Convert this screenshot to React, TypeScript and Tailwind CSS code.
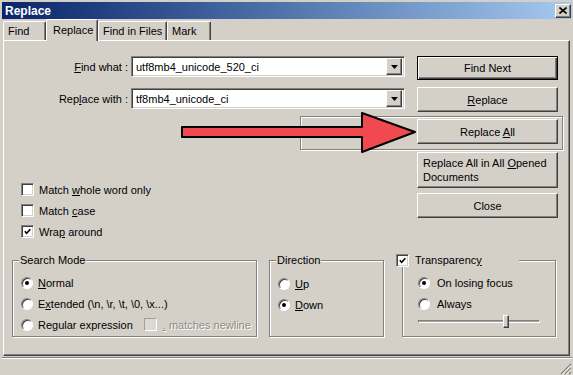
import React from "react";

const raised =
  "border border-t-white border-l-white border-r-[#404040] border-b-[#404040] shadow-[inset_-1px_-1px_0_#808080]";
const sunken =
  "border border-t-[#808080] border-l-[#808080] border-r-white border-b-white shadow-[inset_1px_1px_0_#404040,inset_-1px_-1px_0_#d4d0c8]";
const etched = "border border-[#808080] shadow-[inset_1px_1px_0_#fff,1px_1px_0_#fff]";

function U({ children }: { children: React.ReactNode }) {
  return <span className="underline underline-offset-[1px]">{children}</span>;
}

function Checkbox({ checked = false, disabled = false }: { checked?: boolean; disabled?: boolean }) {
  return (
    <span
      className={`flex h-[13px] w-[13px] shrink-0 items-center justify-center ${
        disabled
          ? "border border-t-[#a0a0a0] border-l-[#a0a0a0] border-r-white border-b-white bg-[#dcd9d2]"
          : `${sunken} bg-white`
      }`}
    >
      {checked && (
        <svg width="7" height="7" viewBox="0 0 7 7">
          <polyline points="0.8,3.2 2.6,5.2 6.4,1.2" fill="none" stroke="#000" strokeWidth="1.6" />
        </svg>
      )}
    </span>
  );
}

function Radio({ checked = false }: { checked?: boolean }) {
  return (
    <span className="flex h-[12px] w-[12px] shrink-0 items-center justify-center rounded-full border border-t-[#808080] border-l-[#808080] border-r-white border-b-white bg-white shadow-[inset_1px_1px_0_#404040]">
      {checked && <span className="h-[4px] w-[4px] rounded-full bg-black" />}
    </span>
  );
}

function Btn({
  children,
  className = "",
  isDefault = false,
}: {
  children: React.ReactNode;
  className?: string;
  isDefault?: boolean;
}) {
  const look = isDefault
    ? "border border-black shadow-[inset_1px_1px_0_#fff,inset_-1px_-1px_0_#404040,inset_-2px_-2px_0_#808080]"
    : raised;
  return (
    <button type="button" className={`flex w-[141px] shrink-0 items-center justify-center bg-[#d4d0c8] ${look} ${className}`}>
      <span>{children}</span>
    </button>
  );
}

function ComboField({ label, value, className = "" }: { label: React.ReactNode; value: string; className?: string }) {
  return (
    <div className={`flex items-center ${className}`}>
      <div className="flex h-[21px] w-[124px] items-center justify-end">
        <span>{label}</span>
      </div>
      <div className={`ml-[3px] flex h-[21px] w-[274px] items-center bg-white pl-[4px] pr-[2px] ${sunken}`}>
        <span className="flex-1 whitespace-nowrap">{value}</span>
        <span className={`flex h-[17px] w-[16px] items-center justify-center bg-[#d4d0c8] ${raised}`}>
          <svg width="7" height="4" viewBox="0 0 7 4">
            <polygon points="0,0 7,0 3.5,4" fill="#000" />
          </svg>
        </span>
      </div>
    </div>
  );
}

function Tab({ label, width, active = false }: { label: string; width: string; active?: boolean }) {
  return (
    <div
      className={`flex items-center rounded-t-[2px] border-t border-l border-r border-t-white border-l-white border-r-[#404040] bg-[#d4d0c8] shadow-[inset_-1px_0_0_#808080] ${width} ${
        active ? "relative z-10 -mb-[1px] h-[22px] pl-[6px] pb-[2px]" : "h-[19px] pl-[4px]"
      }`}
    >
      {label}
    </div>
  );
}

export default function App() {
  return (
    <div className="relative flex h-[375px] w-[573px] flex-col overflow-hidden bg-[#d4d0c8] pl-[2px] pr-[1px] pt-[2px] font-['Liberation_Sans',Arial,sans-serif] text-[11px] leading-[14px] text-black">
      {/* Title bar */}
      <div className="flex h-[17px] shrink-0 items-center justify-between bg-linear-to-r from-[#0a246a] to-[#a6caf0] pl-[3px] pr-[1px]">
        <span className="text-[12px] font-bold text-white">Replace</span>
        <span className={`flex h-[14px] w-[16px] items-center justify-center bg-[#d4d0c8] ${raised}`}>
          <svg width="8" height="7" viewBox="0 0 8 7">
            <path d="M0.5 0.5 L7.5 6.5 M7.5 0.5 L0.5 6.5" stroke="#000" strokeWidth="1.6" />
          </svg>
        </span>
      </div>

      {/* Tabs */}
      <div className="flex h-[21px] shrink-0 items-end pl-[1px]">
        <Tab label="Find" width="w-[43px]" />
        <Tab label="Replace" width="w-[52px]" active />
        <Tab label="Find in Files" width="w-[69px]" />
        <Tab label="Mark" width="w-[44px]" />
      </div>

      {/* Panel */}
      <div className={`ml-[1px] mr-[2px] flex h-[316px] shrink-0 flex-col bg-[#d4d0c8] ${raised}`}>
        <div className="mt-[15px] flex h-[25px] items-start">
          <ComboField
            label={
              <>
                <U>F</U>ind what :
              </>
            }
            value="utf8mb4_unicode_520_ci"
          />
          <Btn isDefault className="ml-[12px] h-[24px]">
            Find Next
          </Btn>
        </div>

        <div className="mt-[6px] flex h-[25px] items-start">
          <ComboField
            className="mt-[1px]"
            label={
              <>
                Rep<U>l</U>ace with :
              </>
            }
            value="tf8mb4_unicode_ci"
          />
          <Btn className="ml-[12px] h-[25px]">
            <U>R</U>eplace
          </Btn>
        </div>

        <div className={`ml-[296px] mt-[4px] h-[34px] w-[263px] pl-[116px] pt-[2px] ${etched}`}>
          <Btn className="h-[25px]">
            Replace <U>A</U>ll
          </Btn>
        </div>

        <div className="mt-[2px] flex">
          <div className="flex w-[413px] flex-col pl-[17px] pt-[27px]">
            <div className="flex h-[21px] items-center gap-[5px]">
              <Checkbox />
              <span>
                Match <U>w</U>hole word only
              </span>
            </div>
            <div className="flex h-[21px] items-center gap-[5px]">
              <Checkbox />
              <span>
                Match <U>c</U>ase
              </span>
            </div>
            <div className="flex h-[21px] items-center gap-[5px]">
              <Checkbox checked />
              <span>
                Wra<U>p</U> around
              </span>
            </div>
          </div>
          <div className="flex w-[141px] flex-col gap-[5px]">
            <Btn className="h-[36px] !justify-start pl-[5px] text-left">
              Replace All in All <U>O</U>pened
              <br />
              Documents
            </Btn>
            <Btn className="h-[25px]">Close</Btn>
          </div>
        </div>

        <div className="mt-[11px] flex items-start pl-[8px]">
          <fieldset className={`h-[84px] w-[245px] ${etched}`}>
            <legend className="ml-[6px] bg-[#d4d0c8] px-[1px]">Search Mode</legend>
            <div className="flex flex-col pl-[8px] pt-[5px]">
              <div className="flex h-[21px] items-center gap-[5px]">
                <Radio checked />
                <span>
                  <U>N</U>ormal
                </span>
              </div>
              <div className="flex h-[21px] items-center gap-[5px]">
                <Radio />
                <span>
                  E<U>x</U>tended (\n, \r, \t, \0, \x...)
                </span>
              </div>
              <div className="flex h-[21px] items-center overflow-hidden whitespace-nowrap">
                <Radio />
                <span className="ml-[5px]">
                  Re<U>g</U>ular expression
                </span>
                <span className="ml-[11px]">
                  <Checkbox disabled />
                </span>
                <span className="ml-[6px] text-[#8c8a85] [text-shadow:1px_1px_0_#fff]">
                  <U>.</U> matches newline
                </span>
              </div>
            </div>
          </fieldset>

          <fieldset className={`ml-[12px] h-[84px] w-[115px] ${etched}`}>
            <legend className="ml-[6px] bg-[#d4d0c8] px-[1px]">Direction</legend>
            <div className="flex flex-col pl-[8px] pt-[6px]">
              <div className="flex h-[21px] items-center gap-[5px]">
                <Radio />
                <span>
                  <U>U</U>p
                </span>
              </div>
              <div className="flex h-[21px] items-center gap-[5px]">
                <Radio checked />
                <span>
                  <U>D</U>own
                </span>
              </div>
            </div>
          </fieldset>

          <fieldset className={`ml-[18px] h-[84px] w-[154px] ${etched}`}>
            <legend className="-ml-[7px] flex w-[123px] items-center gap-[6px] bg-[#d4d0c8]">
              <Checkbox checked />
              <span>
                Transparenc<U>y</U>
              </span>
            </legend>
            <div className="flex flex-col pl-[15px] pt-[5px]">
              <div className="flex h-[21px] items-center gap-[7px]">
                <Radio checked />
                <span>On losing focus</span>
              </div>
              <div className="flex h-[21px] items-center gap-[7px]">
                <Radio />
                <span>Always</span>
              </div>
              <div className="relative flex h-[14px] w-[122px] items-center">
                <div className="h-[3px] w-full border border-t-[#808080] border-l-[#808080] border-r-white border-b-white bg-[#404040]/30" />
                <div className={`absolute left-[85px] top-[1px] h-[13px] w-[6px] bg-[#d4d0c8] ${raised}`} />
              </div>
            </div>
          </fieldset>
        </div>
      </div>

      {/* Status bar */}
      <div className="mt-[1px] flex flex-1 items-end justify-end border-t border-t-[#808080] shadow-[inset_0_1px_0_#fff]">
        <svg width="13" height="13" viewBox="0 0 13 13">
          <path d="M12 2 L2 12 M12 6 L6 12 M12 10 L10 12" stroke="#808080" strokeWidth="1.2" />
          <path d="M12 3.5 L3.5 12 M12 7.5 L7.5 12 M12 11.5 L11.5 12" stroke="#fff" strokeWidth="1" />
        </svg>
      </div>

      {/* Annotation arrow */}
      <svg className="absolute left-[180px] top-[111px]" width="238" height="43" viewBox="0 0 238 43">
        <polygon
          points="2,16 182,16 182,2 235,21 182,41 182,26 2,26"
          fill="#f04a50"
          stroke="#000"
          strokeWidth="2"
          strokeLinejoin="round"
        />
      </svg>
    </div>
  );
}
